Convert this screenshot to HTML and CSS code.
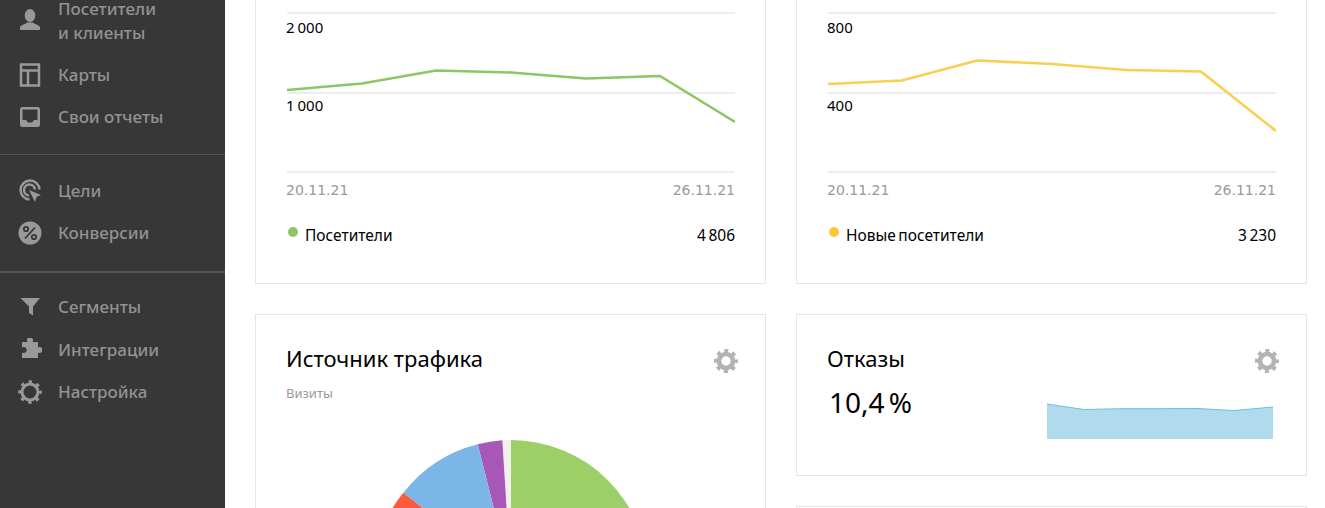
FILE: index.html
```html
<!DOCTYPE html>
<html lang="ru">
<head>
    <meta charset="UTF-8">
    <meta name="viewport" content="width=device-width, initial-scale=1.0">
    <title>Сводка</title>
    <link rel="stylesheet" href="styles.css">
</head>
<body>
    <aside class="sidebar">
        <ul class="menu menu-first">
            <li class="menu-item">
                <svg class="menu-icon" viewBox="0 0 24 24"><ellipse cx="12" cy="6.5" rx="5.3" ry="6.5"/><path d="M2 21v-2.500c0-2 5-3.500 7.500-5h5c2.500 1.500 7.500 3 7.500 5V21z"/></svg>
                <span>Посетители<br>и клиенты</span>
            </li>
            <li class="menu-item">
                <svg class="menu-icon" viewBox="0 0 24 24"><path class="line" d="M3 1.500h18v21H3zM3 7.500h18M10 7.500v15"/></svg>
                <span>Карты</span>
            </li>
            <li class="menu-item">
                <svg class="menu-icon" viewBox="0 0 24 24"><path fill-rule="evenodd" d="M4.500 2h15A2.500 2.500 0 0 1 22 4.500v15a2.500 2.500 0 0 1-2.500 2.500h-15A2.500 2.500 0 0 1 2 19.500v-15A2.500 2.500 0 0 1 4.500 2zM4.500 4.500V15H8l2 2.500h4l2-2.500h3.500V4.500z"/></svg>
                <span>Свои отчеты</span>
            </li>
        </ul>
        <ul class="menu menu-middle">
            <li class="menu-item">
                <svg class="menu-icon" viewBox="0 0 24 24"><path class="line" d="M11.500 20.500a9.500 9.500 0 1 1 10-10M11 16.500a5.500 5.500 0 1 1 6-6"/><path d="M11 11l12 5-4.500 2-1.500 5z"/></svg>
                <span>Цели</span>
            </li>
            <li class="menu-item">
                <svg class="menu-icon" viewBox="0 0 24 24"><circle cx="12" cy="12" r="11.500"/><path class="cut" d="M7 17.500L17 6.500"/><circle class="cut" cx="8" cy="8" r="2.200"/><circle class="cut" cx="16" cy="16" r="2.200"/></svg>
                <span>Конверсии</span>
            </li>
        </ul>
        <ul class="menu menu-last">
            <li class="menu-item">
                <svg class="menu-icon" viewBox="0 0 24 24"><path d="M2.500 3H22l-7 8.500V20.500l-4-2.500v-6.500z"/></svg>
                <span>Сегменты</span>
            </li>
            <li class="menu-item">
                <svg class="menu-icon" viewBox="0 0 24 24"><path d="M4 4h5.500a3 3 0 1 1 5 0H20v5.500a3 3 0 1 1 0 5V20H4v-5.500a3 3 0 1 0 0-5z"/></svg>
                <span>Интеграции</span>
            </li>
            <li class="menu-item">
                <svg class="menu-icon gear-thin" viewBox="0 0 24 24"><use href="#gear-thin"/></svg>
                <span>Настройка</span>
            </li>
        </ul>
    </aside>

    <main class="content">
        <div class="column">
            <section class="card card-top">
                <div class="chart">
                    <div class="chart-row">2 000</div>
                    <div class="chart-row">1 000</div>
                    <div class="chart-base"></div>
                    <svg class="chart-line" viewBox="0 0 448 160"><polyline class="green" points="0,77 75,70.500 149,57.500 224,59.500 299,65.500 373,63 448,109"/></svg>
                </div>
                <div class="dates"><span>20.11.21</span><span>26.11.21</span></div>
                <div class="legend">
                    <i class="dot dot-green"></i>
                    <span class="legend-name">Посетители</span>
                    <span>4 806</span>
                </div>
            </section>

            <section class="card card-pie">
                <div class="card-head">
                    <h2>Источник трафика</h2>
                    <svg class="gear" viewBox="0 0 24 24"><use href="#gear"/></svg>
                </div>
                <p class="card-sub">Визиты</p>
                <svg class="pie" viewBox="0 0 274 274">
                    <path fill="#9ccf67" d="M137 137V0a137 137 0 0 1 0 274z"/>
                    <path fill="#f2f1ee" d="M137 137V0a137 137 0 0 0-8.700 .3z"/>
                    <path fill="#a757b6" d="M137 137L128.300 .3a137 137 0 0 0-24.600 3.900z"/>
                    <path fill="#7bb6e6" d="M137 137L103.700 4.200a137 137 0 0 0-74.400 48.600z"/>
                    <path fill="#fc5a3c" d="M137 137L29.300 52.800a137 137 0 0 0-26 51z"/>
                </svg>
            </section>
        </div>

        <div class="column">
            <section class="card card-top">
                <div class="chart">
                    <div class="chart-row">800</div>
                    <div class="chart-row">400</div>
                    <div class="chart-base"></div>
                    <svg class="chart-line" viewBox="0 0 448 160"><polyline class="yellow" points="0,71 74,67.500 149,47.500 224,51 299,57 373,58.500 448,118"/></svg>
                </div>
                <div class="dates"><span>20.11.21</span><span>26.11.21</span></div>
                <div class="legend">
                    <i class="dot dot-yellow"></i>
                    <span class="legend-name">Новые посетители</span>
                    <span>3 230</span>
                </div>
            </section>

            <section class="card card-bounce">
                <div class="card-head">
                    <h2>Отказы</h2>
                    <svg class="gear" viewBox="0 0 24 24"><use href="#gear"/></svg>
                </div>
                <div class="bounce-body">
                    <div class="bounce-value">10,4 %</div>
                    <svg class="spark" viewBox="0 0 227 36">
                        <path fill="#afdbec" d="M0 1L37 6.500L74 5.700L112 5.700L150 5.500L187 7.500L226 4V36H0z"/>
                        <polyline fill="none" stroke="#6cc0dc" stroke-width="1" points="0,1 37,6.500 74,5.700 112,5.700 150,5.500 187,7.500 226,4"/>
                    </svg>
                </div>
            </section>

            <section class="card"></section>
        </div>
    </main>

    <svg class="sprite" width="0" height="0">
        <symbol id="gear" viewBox="0 0 24 24">
            <circle cx="12" cy="12" r="7" fill="none" stroke="#b3b3b3" stroke-width="4.600"/>
            <circle cx="12" cy="12" r="10" fill="none" stroke="#b3b3b3" stroke-width="4" stroke-dasharray="3.900 3.954" stroke-dashoffset="1.950"/>
        </symbol>
        <symbol id="gear-thin" viewBox="0 0 24 24">
            <circle cx="12" cy="12" r="8" fill="none" stroke="#999" stroke-width="3"/>
            <circle cx="12" cy="12" r="10.300" fill="none" stroke="#999" stroke-width="3" stroke-dasharray="3.400 4.690" stroke-dashoffset="1.700"/>
        </symbol>
    </svg>
</body>
</html>
```

FILE: styles.css
```css
:root {
    --sidebar-bg: #373737;
    --sidebar-text: #929292;
    --sidebar-icon: #999999;
    --border: #e6e6e6;
    --grid: #eeeeee;
    --text: #000000;
    --muted: #999999;
}

html, body {
    height: 100%;
    overflow: hidden;
}

body {
    margin: 0;
    display: flex;
    font-family: 'Noto Sans', sans-serif;
    color: var(--text);
    background: #ffffff;
}

/* Меню слева */
.sidebar {
    width: 225px;
    flex-shrink: 0;
    background: var(--sidebar-bg);
    color: var(--sidebar-text);
    font-size: 17px;
    font-weight: 500;
    line-height: 24px;
}

.menu {
    list-style: none;
    margin: 0;
    padding: 16px 0;
    border-bottom: 1px solid #555555;
}

.menu-first {
    margin-top: -12px;
    padding-top: 0;
}

.menu-middle {
    padding: 15px 0 17px;
}

.menu-last {
    padding-top: 13px;
    border-bottom: none;
    border-top: 1px solid #555555;
}

.menu-item {
    display: flex;
    align-items: center;
    gap: 16px;
    padding: 9px 0 9px 18px;
}

.menu-last .menu-item:first-child {
    padding-bottom: 10px;
}

.menu-icon {
    width: 24px;
    height: 24px;
    flex-shrink: 0;
    fill: var(--sidebar-icon);
}

.menu-icon .line {
    fill: none;
    stroke: var(--sidebar-icon);
    stroke-width: 2.500;
}

.menu-icon .cut {
    fill: none;
    stroke: var(--sidebar-bg);
    stroke-width: 1.800;
}

.sprite {
    position: absolute;
}

/* Карточки */
.content {
    flex: 1;
    display: flex;
    gap: 30px;
    padding: 0 18px 0 30px;
}

.column {
    width: 511px;
    display: flex;
    flex-direction: column;
    gap: 30px;
}

.card {
    flex-shrink: 0;
    box-sizing: border-box;
    border: 1px solid var(--border);
    padding: 27px 30px 0 31px;
}

.card-top {
    height: 284px;
    border-top: none;
    padding-top: 12px;
}

.card-bounce {
    height: 162px;
}

.card-head {
    display: flex;
    justify-content: space-between;
    align-items: center;
    height: 32px;
}

.card-head h2 {
    margin: 0 0 0 -1px;
    font-size: 22px;
    font-weight: 400;
    line-height: 32px;
}

.gear {
    width: 24px;
    height: 24px;
    margin: 6px -3px 0 0;
}

.card-sub {
    margin: 10px 0 0 -1px;
    font-size: 13px;
    line-height: 18px;
    color: var(--muted);
}

/* Графики */
.chart {
    position: relative;
}

.chart-row {
    box-sizing: border-box;
    height: 80px;
    border-top: 2px solid var(--grid);
    padding-top: 4px;
    font-size: 15px;
    line-height: 18px;
    word-spacing: -1px;
    text-indent: -1px;
}

.chart-row + .chart-row {
    height: 79px;
    padding-top: 2px;
}

.chart-base {
    border-top: 2px solid var(--grid);
}

.chart-line {
    position: absolute;
    top: 1px;
    left: 0;
    width: 448px;
    height: 160px;
}

.chart-line polyline {
    fill: none;
    stroke-width: 2.600;
}

.chart-line .green {
    stroke: #8cc665;
}

.chart-line .yellow {
    stroke: #f9cf50;
}

.dates {
    display: flex;
    justify-content: space-between;
    margin: 7px 0 0 -1px;
    font-family: 'DejaVu Sans', sans-serif;
    font-size: 14px;
    line-height: 20px;
    color: var(--muted);
}

.legend {
    display: flex;
    align-items: center;
    margin-top: 23px;
    font-size: 15.500px;
    line-height: 24px;
    word-spacing: -1.500px;
}

.legend-name {
    flex: 1;
    margin-left: -1px;
}

.dot {
    width: 10px;
    height: 10px;
    margin: -6px 8px 0 1px;
    border-radius: 50%;
}

.dot-green {
    background: #8cc665;
}

.dot-yellow {
    background: #fdc835;
}

.pie {
    display: block;
    width: 274px;
    height: 274px;
    margin: 38px auto 0;
}

/* Отказы */
.bounce-body {
    display: flex;
    justify-content: space-between;
}

.bounce-value {
    margin: 8px 0 0 1px;
    font-size: 28px;
    line-height: 40px;
    word-spacing: -3px;
}

.spark {
    width: 227px;
    height: 36px;
    margin: 29px 2px 0 0;
}
```
